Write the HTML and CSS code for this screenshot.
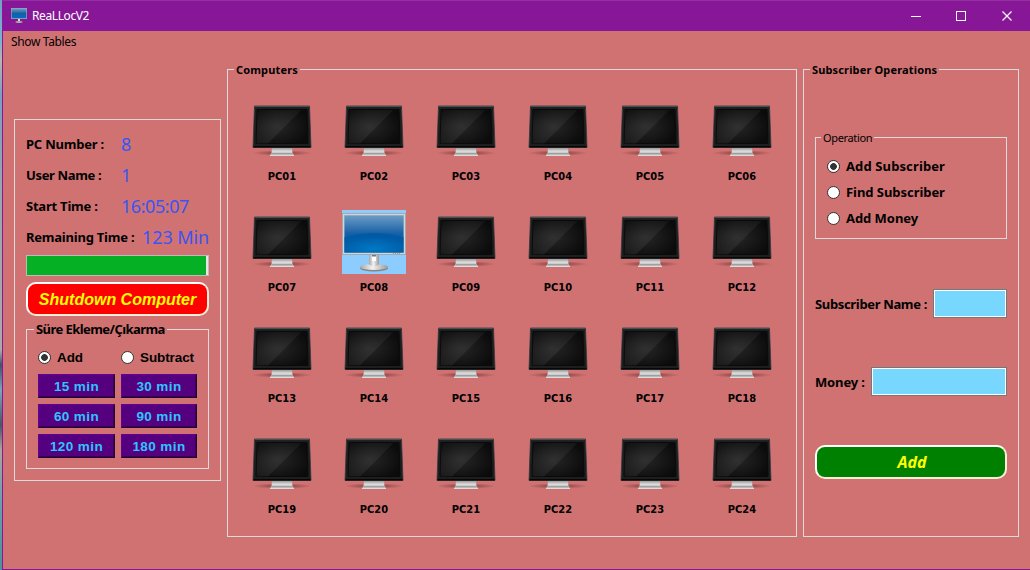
FILE: index.html
```
<!DOCTYPE html>
<html lang="en">
<head>
<meta charset="utf-8">
<title>ReaLLocV2</title>
<link rel="stylesheet" href="styles.css">
</head>
<body>
<svg width="0" height="0" class="defs" aria-hidden="true">
  <defs>
    <radialGradient id="dark" cx="0.4" cy="0.5" r="0.65"><stop offset="0" stop-color="#262626"/><stop offset="1" stop-color="#0b0b0b"/></radialGradient>
    <linearGradient id="shine" x1="0" y1="0" x2="0.5" y2="0.7"><stop offset="0" stop-color="#fff" stop-opacity="0.01"/><stop offset="1" stop-color="#fff" stop-opacity="0.06"/></linearGradient>
    <linearGradient id="foot" x1="0" y1="0" x2="0" y2="1"><stop offset="0" stop-color="#999"/><stop offset="0.4" stop-color="#ddd"/><stop offset="0.8" stop-color="#b5b5b5"/><stop offset="1" stop-color="#eee"/></linearGradient>
    <radialGradient id="shade"><stop offset="0" stop-color="#401818" stop-opacity="0.6"/><stop offset="1" stop-color="#401818" stop-opacity="0"/></radialGradient>
    <linearGradient id="blue" x1="0" y1="0" x2="0" y2="1"><stop offset="0" stop-color="#6c9cc6"/><stop offset="0.5" stop-color="#155fa5"/><stop offset="1" stop-color="#0070c0"/></linearGradient>
    <radialGradient id="glow" cx="0.5" cy="0.8" r="0.6"><stop offset="0" stop-color="#0079c4"/><stop offset="1" stop-color="#005ba6"/></radialGradient>
    <linearGradient id="steel" x1="0" y1="0" x2="1" y2="0"><stop offset="0" stop-color="#a8a8a8"/><stop offset="0.45" stop-color="#f2f2f2"/><stop offset="1" stop-color="#999"/></linearGradient>
  </defs>
  <symbol id="pc-off" viewBox="0 0 64 64">
    <ellipse cx="32" cy="54" rx="30" ry="2.800" fill="url(#shade)"/>
    <path d="M22 49h20l.5 5 1.500 2v1H20v-1l1.500-2z" fill="url(#foot)"/>
    <path d="M21.500 54.500h21" stroke="#888" stroke-width=".6"/>
    <path d="M4.500 7h55l1.500 41.500H3z" fill="#1c1e20" stroke="#34383a" stroke-width=".8"/>
    <path d="M5 7.600h54" stroke="#4b5658" stroke-width="1"/>
    <path d="M7 10.500h50l1 34H6z" fill="url(#dark)" stroke="#080808" stroke-width=".8"/>
    <path d="M7.500 11h44L18 44.500H6.500z" fill="url(#shine)"/>
    <path d="M3.500 47.700h57" stroke="#070707" stroke-width="1.400"/>
  </symbol>
  <symbol id="pc-on" viewBox="0 0 64 64">
    <rect x=".5" y="3.500" width="63" height="41" fill="#b4b9bc" stroke="#a3a9ad"/>
    <rect x="1.500" y="4.500" width="61" height="39" fill="none" stroke="#d2d5d7"/>
    <rect x="2.500" y="5.500" width="59" height="37" fill="url(#blue)"/>
    <path d="M2.500 27Q32 19 61.500 27V42.500h-59z" fill="url(#glow)"/>
    <path d="M51 43.500h8" stroke="#999" stroke-dasharray="1 1"/>
    <ellipse cx="32" cy="58" rx="14" ry="3.600" fill="#858585"/>
    <ellipse cx="32" cy="57" rx="14" ry="3" fill="url(#steel)"/>
    <path d="M27 45h10v9q-1 2-5 2t-5-2z" fill="url(#steel)"/>
    <path d="M30 45h4v6h-4z" fill="#fff"/><path d="M30 45h4v1.500h-4z" fill="#777"/>
  </symbol>
</svg>
<div class="window">
  <header class="titlebar">
    <svg class="app-icon" viewBox="0 0 16 16"><rect width="16" height="11" fill="#91a7b5"/><rect x=".7" y=".7" width="14.600" height="9.500" fill="url(#blue)"/><path d="M7 11h2v2.500H7z" fill="#ddd"/><ellipse cx="8" cy="14" rx="3.500" ry="1" fill="#aaa"/></svg>
    <span class="app-name">ReaLLocV2</span>
    <svg class="controls" width="138" height="30" fill="none" stroke="#fff"><path d="M19 15.500h10M64.500 10.500h9v9h-9z" shape-rendering="crispEdges"/><path d="M110.500 10.500l9 9m0-9l-9 9" stroke-width="1.200"/></svg>
  </header>
  <nav class="menu"><span>Show Tables</span></nav>
  <main class="columns">
    <section class="session">
      <div class="row"><span>PC Number :</span><span class="value">8</span></div>
      <div class="row"><span class="user">User Name :</span><span class="value">1</span></div>
      <div class="row"><span>Start Time :</span><span class="value time">16:05:07</span></div>
      <div class="row remaining"><span>Remaining Time :</span><span class="value mins">123 Min</span></div>
      <div class="progress"><div></div></div>
      <button class="round shutdown">Shutdown Computer</button>
      <fieldset class="duration">
        <legend>Süre Ekleme/Çıkarma</legend>
        <div class="pair">
          <label><i class="radio on"></i><span>Add</span></label>
          <label><i class="radio"></i><span>Subtract</span></label>
        </div>
        <div class="times">
          <button>15 min</button><button>30 min</button>
          <button>60 min</button><button>90 min</button>
          <button>120 min</button><button>180 min</button>
        </div>
      </fieldset>
    </section>
    <fieldset class="computers">
      <legend>Computers</legend>
      <div class="pcs" id="pcs"></div>
    </fieldset>
    <fieldset class="subscriber">
      <legend>Subscriber Operations</legend>
      <fieldset class="operation">
        <legend>Operation</legend>
        <label><i class="radio on"></i><span class="spaced">Add Subscriber</span></label>
        <label><i class="radio"></i><span>Find Subscriber</span></label>
        <label><i class="radio"></i><span>Add Money</span></label>
      </fieldset>
      <div class="field name"><span>Subscriber Name :</span><input type="text"></div>
      <div class="field money"><span>Money :</span><input type="text"></div>
      <button class="round submit">Add</button>
    </fieldset>
  </main>
</div>
<script src="app.js"></script>
</body>
</html>
```
FILE: app.js
```
const active = 8;
const grid = document.getElementById('pcs');
for (let n = 1; n <= 24; n++) {
  const on = n === active;
  const cell = document.createElement('div');
  cell.className = on ? 'pc active' : 'pc';
  cell.innerHTML = `<svg width="64" height="64"><use href="#${on ? 'pc-on' : 'pc-off'}"/></svg><span>PC${String(n).padStart(2, '0')}</span>`;
  grid.append(cell);
}
```
FILE: styles.css
```
* { box-sizing: border-box; }
body {
  margin: 0; width: 1030px; height: 570px; overflow: hidden; padding-left: 2px;
  background: linear-gradient(#789fc5 0, #79b2d2 40px, #b8b6ae 60px, #789fc5 95px, #9aa8ad 200px, #aaa 350px, #43506d 365px, #7aa6bd 390px, #4b5566 425px, #aaa69b 450px, #68a0b0 500px, #4b9299 570px);
  font-family: "Noto Sans", sans-serif; font-size: 13px; color: #000;
}
.defs { position: absolute; }
fieldset { margin: 0; padding: 0; min-width: 0; border: 1px solid #dcdcdc; }
legend { padding: 0 2px; white-space: nowrap; font-weight: 700; height: 13px; line-height: 13px; }
button { font: inherit; padding: 0; margin: 0; white-space: nowrap; }
svg { display: block; }
.window { height: 570px; background: #d07272; border-left: 1px solid #881798; border-bottom: 1px solid #881798; }
.titlebar { display: flex; align-items: center; height: 31px; padding-left: 8px; background: #881798; border-top: 1px solid #9430a2; }
.app-icon { width: 16px; height: 16px; }
.app-name { margin: -1px 0 0 5px; flex: 1; color: #fff; font-size: 12px; letter-spacing: -.4px; }
.menu { height: 32px; padding: 2px 8px; font-size: 12px; line-height: 18px; letter-spacing: -.35px; }
.columns { display: grid; grid-template-columns: 207px 570px 216px; column-gap: 6px; padding-left: 11px; align-items: start; }

.session { margin-top: 56px; height: 362px; border: 1px solid #dcdcdc; padding: 8px 11px 0; }
.row { display: grid; grid-template-columns: 95px 1fr; height: 31px; align-items: center; font-weight: 700; white-space: nowrap; letter-spacing: -.22px; }
.row .user { letter-spacing: -.35px; }
.remaining { grid-template-columns: 116px 1fr; }
.value { font-weight: 400; font-size: 18px; color: #3955f5; }
.time { letter-spacing: -.45px; }
.mins { letter-spacing: -.1px; }
.progress { width: 183px; height: 21px; margin-top: 3px; border: 1px solid #bcbcbc; background: #e6e6e6; }
.progress div { width: 179px; height: 19px; background: #06b025; }
.round { display: block; height: 34px; border: 2px solid; border-color: #fff #f7edd8 #f7edd8 #fff; border-radius: 10px; color: #ff0; font-weight: 700; font-style: italic; }
.shutdown { width: 183px; margin-top: 6px; background: #f00; font-family: "Liberation Sans", Arial, sans-serif; font-size: 16px; padding-top: 1px; }
.duration { width: 183px; height: 146px; margin-top: 7px; padding-left: 11px; }
.duration legend { margin-left: -4px; letter-spacing: -.56px; }
.radio { flex: none; width: 13px; height: 13px; border: 1px solid #333; border-radius: 50%; background: #fff; }
.radio.on { background: radial-gradient(circle, #333 0 3px, #fff 3.700px); }
label { display: flex; align-items: center; white-space: nowrap; font-weight: 700; }
.pair { display: grid; grid-template-columns: 83px 1fr; padding-top: 14px; font-family: "Liberation Sans", Arial, sans-serif; font-size: 13.500px; letter-spacing: -.1px; }
.pair label { gap: 6px; height: 15px; line-height: 15px; }
.times { display: grid; grid-template-columns: 77px 76px; gap: 6px; margin-top: 9px; font-family: "Liberation Sans", Arial, sans-serif; font-size: 13.500px; }
.times button { height: 24px; background: #55007f; border: 1px solid; border-color: #650096 #210032 #210032 #650096; box-shadow: inset -1px -1px #3b0058; color: #2fc4ff; font-weight: 700; letter-spacing: .4px; }

.computers { height: 474px; padding-left: 6px; font-size: 11px; }
.pcs { display: grid; grid-template-columns: repeat(6, 92px); grid-auto-rows: 111px; padding: 23px 0 0 2px; }
.pc { display: flex; flex-direction: column; align-items: center; font-family: "DejaVu Sans Condensed", "DejaVu Sans", sans-serif; font-stretch: condensed; font-weight: 700; line-height: 14px; gap: 7px; }
.pc.active svg { background: #8dccff; }

.subscriber { height: 474px; padding-left: 11px; }
.subscriber > legend, .computers > legend { font-size: 11px; letter-spacing: .15px; }
.subscriber > legend { margin-left: -5px; }
.operation { width: 192px; height: 108px; margin-top: 55px; padding-left: 11px; }
.operation legend { margin-left: -6px; font-size: 11px; font-weight: 400; letter-spacing: -.35px; }
.operation label { height: 26px; gap: 6px; letter-spacing: -.05px; }
.operation .spaced { letter-spacing: .12px; }
.operation legend + label { margin-top: 9px; }
.field { display: flex; justify-content: space-between; align-items: center; width: 192px; height: 29px; font-weight: 700; white-space: nowrap; letter-spacing: -.34px; }
.field input { height: 29px; border: 1px solid #777; background: #78d7ff; box-shadow: inset 0 0 0 1px #fff; border-radius: 0; padding: 3px; }
.name { margin-top: 50px; }
.name input { width: 74px; }
.money { margin-top: 49px; letter-spacing: -.15px; }
.money input { width: 136px; }
.submit { width: 192px; margin-top: 49px; padding-left: 2px; background: #008000; font-size: 16px; }
```
